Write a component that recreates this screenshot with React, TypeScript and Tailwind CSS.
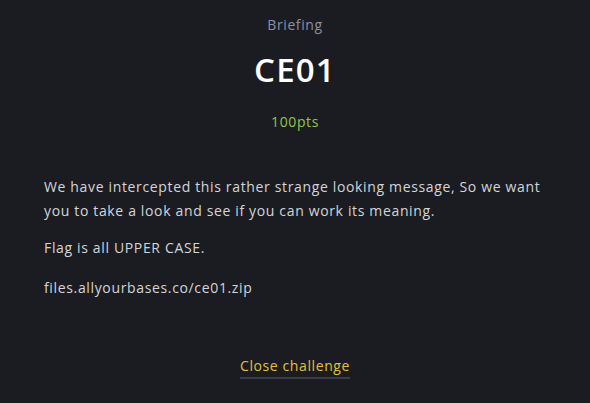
export default function App() {
  return (
    <div
      className="min-h-[403px] w-full bg-[#1b1c21] px-[44px] text-[#d4d5da]"
      style={{ fontFamily: "'Open Sans', 'Noto Sans', sans-serif" }}
    >
      <div className="flex flex-col items-center pt-[15px]">
        <p className="text-[14px] leading-[20px] tracking-[0.6px] text-[#8b8fa5]">Briefing</p>
        <h1 className="mt-[15px] text-[33px] font-semibold leading-[40px] tracking-[1.2px] text-white">
          CE01
        </h1>
        <p className="mt-[22px] text-[14px] leading-[20px] tracking-[0.6px] text-[#93c54b]">100pts</p>
      </div>

      <div className="mt-[43px] text-[14px] leading-[24px] tracking-[0.65px]">
        <p>
          We have intercepted this rather strange looking message, So we want you to take a
          look and see if you can work its meaning.
        </p>
        <p className="mt-[13px]">Flag is all UPPER CASE.</p>
        <p className="mt-[16px]">files.allyourbases.co/ce01.zip</p>
      </div>

      <div className="mt-[56px] flex justify-center">
        <button
          type="button"
          className="border-b-2 border-[#3b3d46] pb-[1px] text-[14px] leading-[20px] tracking-[0.6px] text-[#e3c03c]"
        >
          Close challenge
        </button>
      </div>
    </div>
  );
}
